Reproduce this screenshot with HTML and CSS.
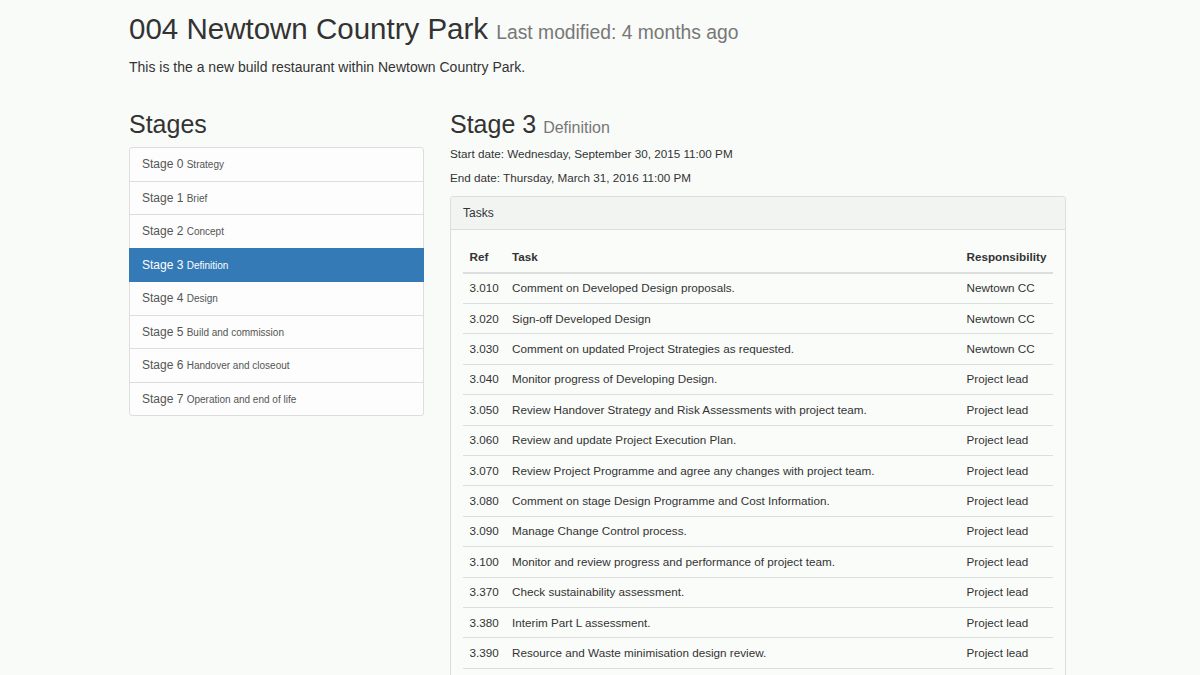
FILE: index.html
```html
<!DOCTYPE html>
<html lang="en">
<head>
<meta charset="utf-8">
<title>004 Newtown Country Park</title>
<link rel="stylesheet" href="styles.css">
</head>
<body>
<div class="container">
  <header class="project-header">
    <h1 class="project-title">004 Newtown Country Park <small>Last modified: 4 months ago</small></h1>
    <p class="lead">This is the a new build restaurant within Newtown Country Park.</p>
  </header>
  <div class="row">
    <aside class="col-stages">
      <h2 class="section-title">Stages</h2>
      <div class="list-group">
        <a class="list-group-item" href="#">Stage 0 <small>Strategy</small></a>
        <a class="list-group-item" href="#">Stage 1 <small>Brief</small></a>
        <a class="list-group-item" href="#">Stage 2 <small>Concept</small></a>
        <a class="list-group-item active" href="#">Stage 3 <small>Definition</small></a>
        <a class="list-group-item" href="#">Stage 4 <small>Design</small></a>
        <a class="list-group-item" href="#">Stage 5 <small>Build and commission</small></a>
        <a class="list-group-item" href="#">Stage 6 <small>Handover and closeout</small></a>
        <a class="list-group-item" href="#">Stage 7 <small>Operation and end of life</small></a>
      </div>
    </aside>
    <main class="col-detail">
      <h2 class="section-title">Stage 3 <small>Definition</small></h2>
      <p class="date start">Start date: Wednesday, September 30, 2015 11:00 PM</p>
      <p class="date">End date: Thursday, March 31, 2016 11:00 PM</p>
      <div class="panel">
        <div class="panel-heading">Tasks</div>
        <div class="panel-body">
          <table class="table">
            <thead>
              <tr><th class="ref">Ref</th><th>Task</th><th class="resp">Responsibility</th></tr>
            </thead>
            <tbody>
              <tr><td>3.010</td><td>Comment on Developed Design proposals.</td><td>Newtown CC</td></tr>
              <tr><td>3.020</td><td>Sign-off Developed Design</td><td>Newtown CC</td></tr>
              <tr><td>3.030</td><td>Comment on updated Project Strategies as requested.</td><td>Newtown CC</td></tr>
              <tr><td>3.040</td><td>Monitor progress of Developing Design.</td><td>Project lead</td></tr>
              <tr><td>3.050</td><td>Review Handover Strategy and Risk Assessments with project team.</td><td>Project lead</td></tr>
              <tr><td>3.060</td><td>Review and update Project Execution Plan.</td><td>Project lead</td></tr>
              <tr><td>3.070</td><td>Review Project Programme and agree any changes with project team.</td><td>Project lead</td></tr>
              <tr><td>3.080</td><td>Comment on stage Design Programme and Cost Information.</td><td>Project lead</td></tr>
              <tr><td>3.090</td><td>Manage Change Control process.</td><td>Project lead</td></tr>
              <tr><td>3.100</td><td>Monitor and review progress and performance of project team.</td><td>Project lead</td></tr>
              <tr><td>3.370</td><td>Check sustainability assessment.</td><td>Project lead</td></tr>
              <tr><td>3.380</td><td>Interim Part L assessment.</td><td>Project lead</td></tr>
              <tr><td>3.390</td><td>Resource and Waste minimisation design review.</td><td>Project lead</td></tr>
            </tbody>
          </table>
        </div>
      </div>
    </main>
  </div>
</div>
</body>
</html>
```
FILE: styles.css
```css
* { box-sizing: border-box; }
html, body { margin: 0; padding: 0; }
body {
  background: #f9fbf9;
  color: #333;
  font-family: "Liberation Sans", Arial, Helvetica, sans-serif;
  font-size: 11.7px;
  line-height: 17px;
}
.container {
  width: 937px;
  margin: 0 0 0 129px;
}
.project-title {
  margin: 12px 0 0;
  font-size: 29.5px;
  line-height: 34px;
  font-weight: 400;
  color: #333;
}
.project-title small {
  font-size: 19.3px;
  color: #777;
  font-weight: 400;
}
.lead {
  margin: 7px 0 0;
  font-size: 14px;
  line-height: 20px;
}
.row {
  display: flex;
  gap: 26px;
  margin-top: 33px;
}
.col-stages { width: 295px; flex: none; }
.col-detail { width: 616px; flex: none; }
.section-title {
  margin: 0;
  font-size: 25px;
  line-height: 28px;
  font-weight: 400;
}
.section-title small {
  font-size: 16px;
  color: #777;
}
.list-group {
  margin-top: 9px;
  display: flex;
  flex-direction: column;
}
.list-group-item {
  display: block;
  padding: 8px 12px;
  line-height: 16.5px;
  height: 34.5px;
  font-size: 12px;
  color: #555;
  text-decoration: none;
  border: 1px solid #ddd;
  margin-bottom: -1px;
  background: #fcfdfc;
}
.list-group-item:first-child { border-radius: 3px 3px 0 0; }
.list-group-item:last-child { border-radius: 0 0 3px 3px; }
.list-group-item small { font-size: 10px; line-height: 1; }
.list-group-item.active {
  background: #337ab7;
  border-color: #337ab7;
  color: #fff;
  position: relative;
}
.date { margin: 0; color: #333; }
.date.start { margin-top: 3px; margin-bottom: 7px; }
.panel {
  margin-top: 10.2px;
  border: 1px solid #ddd;
  border-radius: 3px;
  background: #fafcfa;
}
.panel-heading {
  background: #f2f4f2;
  border-bottom: 1px solid #ddd;
  padding: 8px 12px;
  line-height: 16px;
  font-size: 12px;
  border-radius: 3px 3px 0 0;
}
.panel-body { padding: 12px; }
.table {
  width: 100%;
  border-collapse: collapse;
}
.table th, .table td {
  text-align: left;
  padding: 6.5px 6.6px;
  line-height: 16.4px;
  vertical-align: top;
}
.table th {
  font-weight: 700;
  border-bottom: 2px solid #ddd;
}
.table td { border-bottom: 1px solid #ddd; }
.table .ref, .table .resp { width: 1%; white-space: nowrap; }
```
